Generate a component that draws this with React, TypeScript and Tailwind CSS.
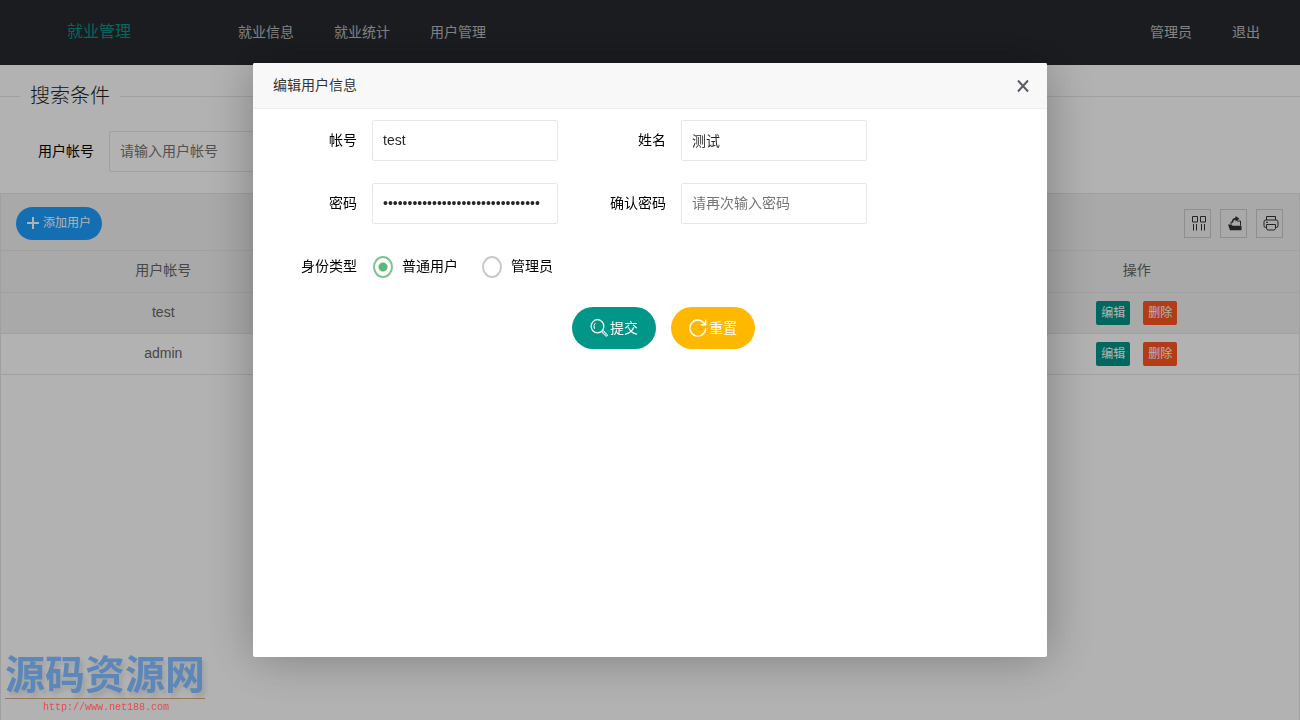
import { useState } from 'react';

const users = ['test', 'admin'];

function ColumnsIcon() {
  return (
    <svg viewBox="0 0 16 16" className="size-4" fill="none" stroke="currentColor" strokeWidth="1">
      <path d="M1.500 1.500h5v5.500h-5zM9.500 1.500h5v5.500h-5z" />
      <path d="M2.500 9v6.500M5.500 9v6.500M10.500 9v6.500M13.500 9v6.500" />
    </svg>
  );
}

function ExportIcon() {
  return (
    <svg viewBox="0 0 16 16" className="size-4" fill="currentColor">
      <path d="M1 9.500h3.500l1.200 1.200h8.800V15.300H3z" />
      <path d="M4 9V7h1.500M10 6h3.500v4.500" fill="none" stroke="currentColor" />
      <path d="M8.500 1l4 2.700-4 2.700V4.800C7 4.800 6.300 5.500 6.300 7.500H4.800C4.800 4.500 6.200 2.900 8.500 2.700z" />
    </svg>
  );
}

function PrintIcon() {
  return (
    <svg viewBox="0 0 16 16" className="size-4" fill="none" stroke="currentColor" strokeWidth="1">
      <path d="M3.500 5V1.500h9V5" />
      <path d="M3.500 12.500H2.800a1.800 1.800 0 0 1-1.800-1.800V6.800A1.800 1.800 0 0 1 2.800 5h10.400A1.800 1.800 0 0 1 15 6.800v3.900a1.800 1.800 0 0 1-1.800 1.800h-.7" />
      <path d="M3.500 9.500h9v3.800a1.700 1.700 0 0 1-1.700 1.700H5.200a1.700 1.700 0 0 1-1.700-1.700zM3 7.300h2" />
    </svg>
  );
}

function SearchIcon() {
  return (
    <svg viewBox="0 0 18 18" className="size-[18px]" fill="none" stroke="currentColor" strokeWidth="1.300" strokeLinecap="round">
      <ellipse cx="7.500" cy="7.300" rx="6.300" ry="6.600" />
      <path d="M4.300 9.500a4 4.500 0 0 1 .8-5.300" strokeWidth="1" />
      <path d="M11.800 12.700l1.400-1.300 4 4.200a1 1 0 0 1-1.400 1.400z" strokeWidth="1" fill="currentColor" fillOpacity="0.4" />
    </svg>
  );
}

function RefreshIcon() {
  return (
    <svg viewBox="0 0 18 18" className="size-[18px]" fill="none" stroke="currentColor" strokeWidth="1.400" strokeLinecap="round" strokeLinejoin="round">
      <path d="M16.700 9.800A7.900 8 0 1 1 14.800 3.800L16.300 5.600" />
      <path d="M16.700 1.300v4.500h-4.500" />
    </svg>
  );
}

const inputClass =
  'h-[41px] rounded-xs border border-[#e6e6e6] bg-white px-2.5 pb-0.5 text-sm text-black/85 outline-none placeholder:text-[#757575]';
const labelClass = 'w-[119px] shrink-0 pr-[15px] pb-0.5 text-right text-sm text-black';
const toolClass = 'flex h-[29px] w-[27px] items-center justify-center border border-[#ccc] pl-0.5 text-[#333]';

export default function App() {
  const [role, setRole] = useState('user');

  return (
    <div className="flex min-h-screen flex-col bg-white font-['Liberation_Sans','Noto_Sans_CJK_SC',sans-serif] text-sm text-[#333]">
      <header className="flex h-[65px] items-center bg-[#27292f] pb-0.5 text-white/70">
        <div className="w-[198px] shrink-0 text-center text-base text-[#009688]">就业管理</div>
        <nav className="ml-5 flex flex-1">
          <a href="#info" className="px-5">就业信息</a>
          <a href="#stats" className="px-5">就业统计</a>
          <a href="#users" className="px-5">用户管理</a>
        </nav>
        <div className="flex pr-5">
          <a href="#me" className="px-5">管理员</a>
          <a href="#logout" className="px-5">退出</a>
        </div>
      </header>

      <main className="flex flex-1 flex-col pt-[15px]">
        <fieldset className="mb-[21px] border-t border-[#e6e6e6]">
          <legend className="ml-5 px-2.5 text-xl leading-[32px] font-light text-[#222]">搜索条件</legend>
          <div className="flex items-center pt-[19px]">
            <label htmlFor="query" className="w-[109px] pr-[15px] pb-0.5 text-right text-black">用户帐号</label>
            <input id="query" placeholder="请输入用户帐号" className={`${inputClass} w-[190px]`} />
          </div>
        </fieldset>

        <section className="flex-1 border border-b-0 border-[#e6e6e6]">
          <div className="flex h-[57px] items-center justify-between border-b border-[#e6e6e6] bg-[#f2f2f2] pt-0.5 pr-4 pl-[15px]">
            <button type="button" className="flex h-[33px] w-[86px] items-center justify-center gap-1 rounded-full bg-[#1e9fff] text-xs text-white">
              <svg viewBox="0 0 12 12" className="size-3" stroke="currentColor" strokeWidth="2">
                <path d="M6 0v12M0 6h12" />
              </svg>
              添加用户
            </button>
            <div className="flex gap-[9px]">
              <button type="button" aria-label="筛选列" className={toolClass}><ColumnsIcon /></button>
              <button type="button" aria-label="导出" className={toolClass}><ExportIcon /></button>
              <button type="button" aria-label="打印" className={toolClass}><PrintIcon /></button>
            </div>
          </div>
          <table className="w-full table-fixed text-center text-[#666]">
            <thead>
              <tr className="h-[41px] border-b border-[#e6e6e6] bg-[#f2f2f2]">
                <th className="pb-0.5 font-normal">用户帐号</th>
                <th />
                <th />
                <th className="pb-0.5 font-normal">操作</th>
              </tr>
            </thead>
            <tbody>
              {users.map((name) => (
                <tr key={name} className="h-[41px] border-b border-[#e6e6e6] first:bg-[#f2f2f2]">
                  <td className="pb-0.5">{name}</td>
                  <td />
                  <td />
                  <td>
                    <div className="flex justify-center gap-[13px] text-xs text-white">
                      <button type="button" className="h-6 rounded-xs bg-[#009688] px-[5px]">编辑</button>
                      <button type="button" className="h-6 rounded-xs bg-[#ff5722] px-[5px]">删除</button>
                    </div>
                  </td>
                </tr>
              ))}
            </tbody>
          </table>
        </section>
      </main>

      <div className="fixed inset-0 flex items-center justify-center bg-black/30">
        <div role="dialog" aria-label="编辑用户信息" className="flex min-h-[82.5vh] w-full max-w-[794px] flex-col rounded-xs bg-white shadow-[1px_1px_50px_rgba(0,0,0,0.3)]">
          <div className="flex h-[46px] items-center justify-between rounded-t-xs border-b border-[#eee] bg-[#f8f8f8] pr-[18px] pl-5">
            <h2 className="pb-0.5">编辑用户信息</h2>
            <button type="button" aria-label="关闭" className="text-[#5c5c66]">
              <svg viewBox="0 0 12 14" className="h-3.5 w-3" stroke="currentColor" strokeWidth="2">
                <path d="M1 1.500l10 11M11 1.500l-10 11" />
              </svg>
            </button>
          </div>

          <form className="flex flex-col pt-[11px]" onSubmit={(e) => e.preventDefault()}>
            <div className="flex flex-wrap gap-x-1 gap-y-[22px]">
              <div className="flex items-center">
                <label htmlFor="account" className={labelClass}>帐号</label>
                <input id="account" defaultValue="test" className={`${inputClass} w-[186px]`} />
              </div>
              <div className="flex items-center">
                <label htmlFor="name" className={labelClass}>姓名</label>
                <input id="name" defaultValue="测试" className={`${inputClass} w-[186px]`} />
              </div>
              <div className="flex items-center">
                <label htmlFor="password" className={labelClass}>密码</label>
                <input id="password" type="password" defaultValue="0123456789abcdef0123456789abcdef" className={`${inputClass} w-[186px]`} />
              </div>
              <div className="flex items-center">
                <label htmlFor="confirm" className={labelClass}>确认密码</label>
                <input id="confirm" type="password" placeholder="请再次输入密码" className={`${inputClass} w-[186px]`} />
              </div>
            </div>

            <div role="radiogroup" aria-labelledby="role-label" className="mt-[22px] flex h-[41px] items-center">
              <span id="role-label" className={labelClass}>身份类型</span>
              {[
                ['user', '普通用户'],
                ['admin', '管理员'],
              ].map(([value, text]) => (
                <label key={value} className="mr-[23px] ml-px flex items-center gap-[9px] text-black">
                  <input
                    type="radio"
                    name="role"
                    value={value}
                    checked={role === value}
                    onChange={() => setRole(value)}
                    className="h-[22px] w-5 appearance-none rounded-[50%] border-2 border-[#c9c9c9] bg-white checked:border-[#7cc392] checked:bg-[radial-gradient(circle,#5fb878_4px,transparent_5px)]"
                  />
                  <span className="pb-0.5">{text}</span>
                </label>
              ))}
            </div>

            <div className="mt-5 flex justify-center gap-[15px] pl-[27px] text-white">
              <button type="submit" className="flex h-[42px] w-[84px] items-center justify-center gap-0.5 rounded-full bg-[#009688]">
                <SearchIcon />
                提交
              </button>
              <button type="reset" className="flex h-[42px] w-[84px] items-center justify-center gap-0.5 rounded-full bg-[#ffb800]">
                <RefreshIcon />
                重置
              </button>
            </div>
          </form>
        </div>
      </div>

      <div className="fixed bottom-1.5 left-[5px] w-[200px] text-center">
        <div className="border-b border-[#94785a] text-[40px] leading-[46px] font-bold whitespace-nowrap text-[#5c87b8] [text-shadow:3px_4px_4px_rgba(0,0,0,0.1)]">源码资源网</div>
        <div className="pt-0.5 pl-0.5 font-['Liberation_Mono',monospace] text-[10px] leading-[13px] text-[#e8484c]">http://www.net188.com</div>
      </div>
    </div>
  );
}
